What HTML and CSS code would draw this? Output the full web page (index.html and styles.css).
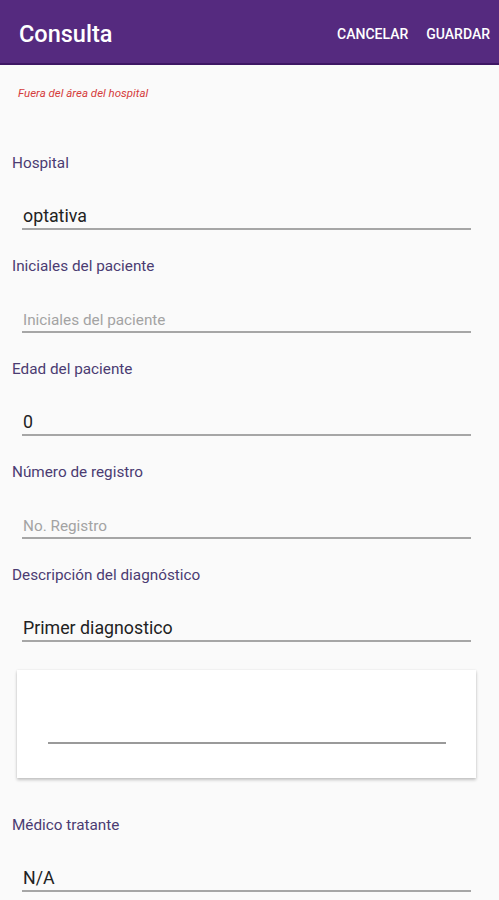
FILE: index.html
```
<!DOCTYPE html>
<html lang="es">
  <head>
    <meta charset="UTF-8" />
    <meta name="viewport" content="width=device-width, initial-scale=1.0" />
    <title>Consulta</title>
    <link rel="stylesheet" href="styles.css">
  </head>
  <body>
    <div class="toolbar">
      <h1 class="toolbar-title">Consulta</h1>
      <div class="toolbar-actions">
        <button class="toolbar-btn">CANCELAR</button>
        <button class="toolbar-btn">GUARDAR</button>
      </div>
    </div>

    <div class="content">
      <p class="warning">Fuera del área del hospital</p>

      <div class="field field-first">
        <label class="field-label">Hospital</label>
        <input class="field-input" type="text" value="optativa" />
      </div>

      <div class="field">
        <label class="field-label">Iniciales del paciente</label>
        <input class="field-input" type="text" placeholder="Iniciales del paciente" />
      </div>

      <div class="field">
        <label class="field-label">Edad del paciente</label>
        <input class="field-input" type="text" value="0" />
      </div>

      <div class="field">
        <label class="field-label">Número de registro</label>
        <input class="field-input" type="text" placeholder="No. Registro" />
      </div>

      <div class="field">
        <label class="field-label">Descripción del diagnóstico</label>
        <input class="field-input" type="text" value="Primer diagnostico" />
      </div>

      <div class="card">
        <div class="card-line"></div>
      </div>

      <div class="field field-after-card">
        <label class="field-label">Médico tratante</label>
        <input class="field-input" type="text" value="N/A" />
      </div>
    </div>
  </body>
</html>
```

FILE: styles.css
```
body {
  margin: 0;
  font-family: Roboto, "Noto Sans", sans-serif;
  background-color: #fafafa;
}
.toolbar {
  height: 65px;
  box-sizing: border-box;
  background-color: #552a7f;
  border-bottom: 2px solid #3e1764;
  display: flex;
  align-items: center;
  justify-content: space-between;
  padding: 4px 9px 0 19px;
}
.toolbar-title {
  margin: 0;
  color: #ffffff;
  font-size: 23.5px;
  font-weight: 500;
}
.toolbar-actions {
  display: flex;
  gap: 18px;
}
.toolbar-btn {
  background: none;
  border: none;
  padding: 0;
  color: #ffffff;
  font-family: Roboto, sans-serif;
  font-size: 14px;
  font-weight: 500;
  cursor: pointer;
}
.content {
  padding: 0 28px 40px 12px;
}
.warning {
  margin: 0;
  padding: 21px 0 0 6px;
  height: 14px;
  line-height: 14px;
  font-size: 11.5px;
  font-style: italic;
  color: #d53c3c;
}
.field {
  margin-top: 26px;
}
.field-first {
  margin-top: 53px;
}
.field-after-card {
  margin-top: 37px;
}
.field-label {
  display: block;
  height: 20px;
  line-height: 20px;
  font-size: 15.3px;
  color: #4b3c72;
}
.field-input {
  display: block;
  box-sizing: border-box;
  width: 449px;
  height: 30px;
  margin: 27px 0 0 10px;
  padding: 2px 0 0 1px;
  border: none;
  border-bottom: 2px solid #a6a6a6;
  background: transparent;
  font-family: Roboto, sans-serif;
  font-size: 17.8px;
  color: #222222;
  outline: none;
}
.field-input::placeholder {
  color: #a3a3a3;
  font-size: 15.3px;
}
.card {
  margin: 28px 0 0 5px;
  width: 459px;
  height: 108px;
  box-sizing: border-box;
  padding: 72px 30px 0 31px;
  background-color: #ffffff;
  box-shadow: 0 2px 3px rgba(0, 0, 0, 0.22), 0 0 2px rgba(0, 0, 0, 0.08);
}
.card-line {
  height: 2px;
  background-color: #9a9a9a;
}
```
